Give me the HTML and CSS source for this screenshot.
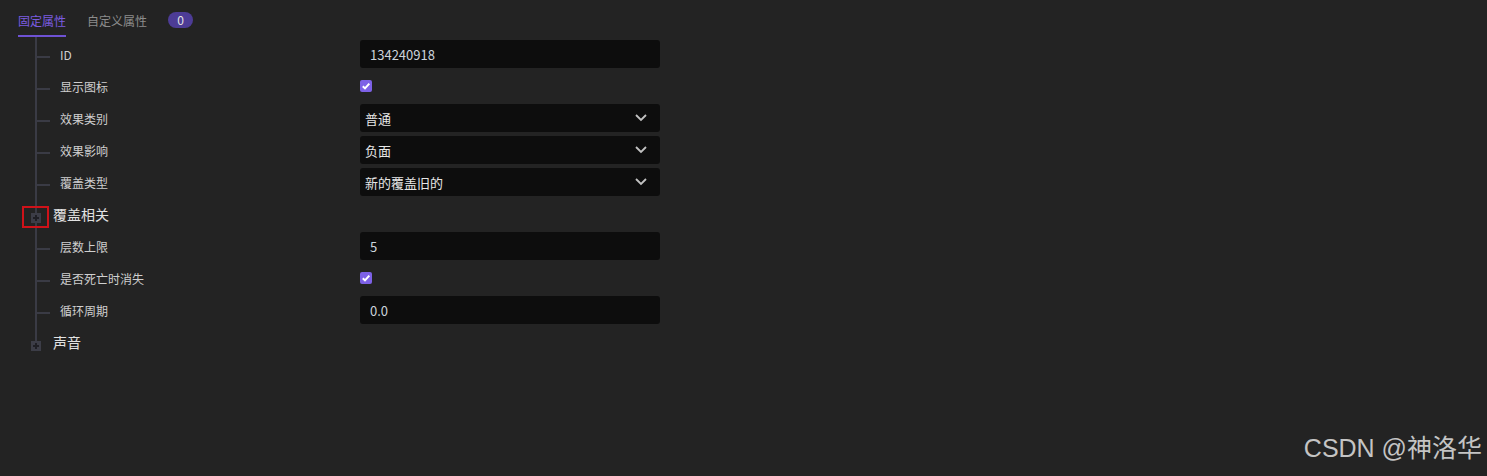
FILE: index.html
```html
<!DOCTYPE html>
<html>
<head>
    <title>Buff Properties</title>
    <link rel="stylesheet" href="styles.css">
</head>
<body>
    <div class="tabs">
        <div class="tab active">固定属性</div>
        <div class="tab">自定义属性</div>
        <div class="badge">0</div>
    </div>

    <div class="tree">
        <div class="row">
            <div class="tick"></div>
            <div class="label">ID</div>
            <div class="input">134240918</div>
        </div>
        <div class="row">
            <div class="tick"></div>
            <div class="label">显示图标</div>
            <svg class="check" width="12" height="12" viewBox="0 0 12 12"><rect width="12" height="12" rx="2" fill="#7d61e6"/><path d="M2.8 6.2 L5 8.4 L9.3 3.6" fill="none" stroke="#fff" stroke-width="2"/></svg>
        </div>
        <div class="row">
            <div class="tick"></div>
            <div class="label">效果类别</div>
            <div class="input select">普通
                <svg width="12" height="8" viewBox="0 0 12 8"><path d="M1 1 L6 6 L11 1" fill="none" stroke="#c2c2c2" stroke-width="1.8"/></svg>
            </div>
        </div>
        <div class="row">
            <div class="tick"></div>
            <div class="label">效果影响</div>
            <div class="input select">负面
                <svg width="12" height="8" viewBox="0 0 12 8"><path d="M1 1 L6 6 L11 1" fill="none" stroke="#c2c2c2" stroke-width="1.8"/></svg>
            </div>
        </div>
        <div class="row">
            <div class="tick"></div>
            <div class="label">覆盖类型</div>
            <div class="input select">新的覆盖旧的
                <svg width="12" height="8" viewBox="0 0 12 8"><path d="M1 1 L6 6 L11 1" fill="none" stroke="#c2c2c2" stroke-width="1.8"/></svg>
            </div>
        </div>
        <div class="row group-row">
            <div class="expand"><span class="mark"></span></div>
            <div class="group-label">覆盖相关</div>
        </div>
        <div class="row">
            <div class="tick"></div>
            <div class="label">层数上限</div>
            <div class="input">5</div>
        </div>
        <div class="row">
            <div class="tick"></div>
            <div class="label">是否死亡时消失</div>
            <svg class="check" width="12" height="12" viewBox="0 0 12 12"><rect width="12" height="12" rx="2" fill="#7d61e6"/><path d="M2.8 6.2 L5 8.4 L9.3 3.6" fill="none" stroke="#fff" stroke-width="2"/></svg>
        </div>
        <div class="row">
            <div class="tick"></div>
            <div class="label">循环周期</div>
            <div class="input">0.0</div>
        </div>
    </div>
    <div class="row group-row last">
        <div class="expand"></div>
        <div class="group-label">声音</div>
    </div>

    <div class="watermark">CSDN @神洛华</div>
</body>
</html>
```

FILE: styles.css
```css
body {
    margin: 0;
    background-color: #232323;
    font-family: "Noto Sans CJK SC", sans-serif;
    font-size: 12px;
    color: #cfcfcf;
    height: 476px;
    position: relative;
    overflow: hidden;
}
.tabs {
    display: flex;
    align-items: flex-start;
    gap: 21px;
    height: 38px;
    padding-left: 18px;
}
.tab {
    padding: 13px 0 6px;
    line-height: 16px;
    border-bottom: 2px solid transparent;
    color: #8c8c8c;
}
.tab.active {
    color: #7b5ce0;
    border-bottom-color: #6e52d4;
}
.badge {
    margin-top: 12px;
    width: 25px;
    height: 16px;
    line-height: 16px;
    border-radius: 8px;
    background-color: #4d3c96;
    color: #e4e4e4;
    text-align: center;
}
.tree {
    margin-left: 35px;
    margin-top: -1px;
    padding-top: 1px;
    padding-bottom: 15px;
    border-left: 2px solid #3a3b45;
}
.row {
    display: flex;
    align-items: center;
    height: 32px;
}
.tick {
    width: 13px;
    height: 2px;
    margin-top: 6px;
    background-color: #3a3b45;
}
.label {
    width: 300px;
    margin-left: 10px;
}
.input {
    box-sizing: border-box;
    width: 300px;
    height: 28px;
    padding: 0 10px;
    display: flex;
    align-items: center;
    background-color: #0d0d0d;
    border-radius: 3px;
    font-size: 13px;
    color: #ccd4dc;
}
.input.select {
    justify-content: space-between;
    padding: 0 13px 0 5px;
    color: #e6e6e6;
}
.group-row {
    margin-left: -6px;
}
.group-row.last {
    margin-left: 31px;
    margin-top: -15px;
}
.expand {
    position: relative;
    width: 10px;
    height: 10px;
    margin-top: 8px;
    background-color: #3c3d47;
}
.expand::before,
.expand::after {
    content: "";
    position: absolute;
    background-color: #1f1f25;
}
.expand::before {
    left: 2px;
    top: 4px;
    width: 6px;
    height: 2px;
}
.expand::after {
    left: 4px;
    top: 2px;
    width: 2px;
    height: 6px;
}
/* red highlight box from the screenshot annotation */
.mark {
    position: absolute;
    left: -9px;
    top: -7px;
    width: 23px;
    height: 18px;
    border: 2px solid #cf1219;
}
.group-label {
    margin-left: 12px;
    font-size: 14px;
    color: #e2e2e2;
}
.watermark {
    position: absolute;
    right: 5px;
    bottom: 15px;
    font-family: "Liberation Sans", "Noto Sans CJK SC", sans-serif;
    font-size: 25px;
    line-height: 25px;
    color: #c4c4c4;
}
```
